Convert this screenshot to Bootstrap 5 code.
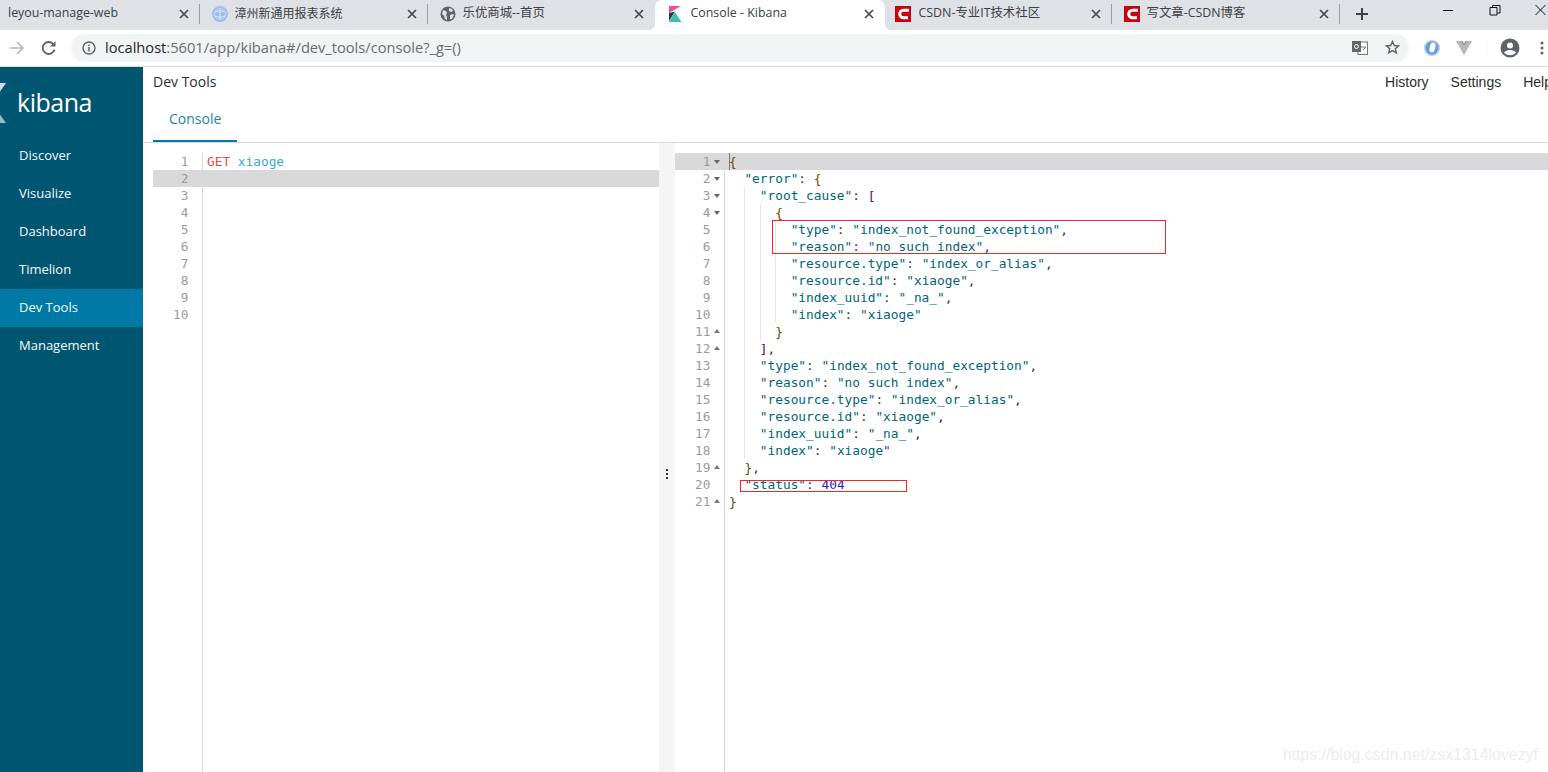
<!DOCTYPE html>
<html lang="en">
<head>
<meta charset="UTF-8">
<title>Console - Kibana</title>
<link href="https://cdn.jsdelivr.net/npm/bootstrap@5.3.0/dist/css/bootstrap.min.css" rel="stylesheet">
<style>
html, body { height: 100%; overflow: hidden; }
body { font-family: "Open Sans", sans-serif; color: #2d2d2d; background: #fff; }
.tab-strip { height: 30px; background: #dee1e6; }
.tab-item { width: 228px; height: 30px; padding: 0 10px 3px 12px; font-size: 12.4px; color: #3c4043; position: relative; flex: none; }
.tab-item .tab-label { flex: 1; white-space: nowrap; overflow: hidden; font-family: "Open Sans", "Noto Sans CJK SC", sans-serif; margin-left: 7px; }
.tab-first { width: 199.5px; padding-left: 8px; }
.tab-first .tab-label { margin-left: 0; }
.tab-item .tab-cjk { font-size: 12px; }
.tab-third { width: 227px; }
.tab-fifth { width: 227px; padding-left: 10px; }
.tab-fifth .tab-label { margin-left: 8px; }
.tab-sep::after { content: ""; position: absolute; right: 0; top: 4px; height: 20px; width: 1px; background: #9a9da1; }
.tab-on { background: #fff; width: 230px; border-radius: 7px 7px 0 0; padding-left: 14px; }
.tab-on .tab-label { margin-left: 9px; }
.tab-on::before, .tab-on::after { content: ""; position: absolute; bottom: 0; width: 7px; height: 7px; }
.tab-on::before { left: -7px; background: radial-gradient(circle at 0 0, #dee1e6 7px, #fff 7.5px); }
.tab-on::after { right: -7px; background: radial-gradient(circle at 100% 0, #dee1e6 7px, #fff 7.5px); }
.tab-close { width: 10px; height: 10px; margin-right: 1px; flex: none; }
.new-tab { margin-left: 16px; margin-bottom: 3px; }
.win-controls { gap: 28px; }
.tool-bar { height: 37px; border-bottom: 1px solid #dcdcdc; padding-bottom: 1px; }
.back-icon { margin-left: 8px; }
.reload-icon { margin-left: 15px; }
.addr-bar { width: 1338px; height: 28px; margin-left: 14px; background: #f1f3f4; border-radius: 14px; padding: 0 9px 0 11px; font-size: 14.65px; color: #6a6d70; }
.addr-text { margin-left: 9px; }
.addr-host { color: #24282b; }
.star-icon { margin-left: 17px; }
.ext-one { margin-left: 15px; }
.ext-two { margin-left: 16px; }
.tool-sep { width: 1px; height: 16px; margin-left: 14px; }
.avatar-icon { margin-left: 13px; }
.menu-icon { margin-left: 20px; }
.app-body { height: 705px; }
.side-nav { width: 143px; background: #005571; flex: none; overflow: hidden; }
.side-logo { height: 70px; color: #fff; font-size: 25px; font-weight: 500; letter-spacing: -.5px; padding: 2px 0 0 17px; position: relative; }
.side-logo svg { position: absolute; left: -30px; top: 16px; }
.side-link { height: 38px; padding-left: 19px; font-size: 13px; font-weight: 500; color: #f7fafb; text-decoration: none; }
.side-link.is-on { background: #0079a5; }
.main-area { min-width: 0; }
.head-bar { height: 30px; padding: 0 0 2px 10px; font-size: 14px; }
.head-links { gap: 22px; white-space: nowrap; margin: 2px -4px 0 0; font-family: "Liberation Sans", sans-serif; }
.tab-row { height: 46px; border-bottom: 1px solid #d9d9d9; padding-left: 10px; }
.tab-link { display: flex; align-items: center; height: 45px; padding: 0 16px; font-size: 14px; color: #1a83a8; border-bottom: 2px solid #0079a5; margin-bottom: -1px; text-decoration: none; width: 84px; }
.editor-row { padding-top: 10px; height: 629px; }
.pane { position: relative; overflow: hidden; }
.pane-left { width: 516px; padding-left: 10px; flex: none; }
.pane-right { flex: 1; min-width: 0; }
.divider { width: 16px; flex: none; background: #f5f5f5; position: relative; margin-top: -10px; }
.divider-dots { position: absolute; left: 7px; top: 325px; width: 2px; height: 12px; background: radial-gradient(circle, #333 1px, transparent 1.2px) 0 0 / 2px 4px; }
.gutter-line { position: absolute; top: -10px; bottom: 0; width: 1px; background: #d9d9d9; left: 49px; }
.pane-left .gutter-line { left: 59px; }
.code-line { display: flex; height: 17px; line-height: 17px; font-family: "DejaVu Sans Mono", monospace; font-size: 12.8px; white-space: pre; position: relative; }
.code-line.is-cur { background: #d9d9db; }
.line-no { width: 50px; flex: none; padding-right: 14.5px; text-align: right; color: #9a9a9a; position: relative; }
.line-code { padding-left: 4px; }
.caret-bar { position: absolute; left: 54px; top: 0; width: 1px; height: 17px; background: #777; }
.fold { position: absolute; left: 39px; top: 7px; width: 0; height: 0; border-left: 3px solid transparent; border-right: 3px solid transparent; }
.fold-open { border-top: 4px solid #666; }
.fold-end { border-bottom: 4px solid #777; top: 6px; }
.ind { display: inline-block; width: 2ch; height: 17px; vertical-align: top; }
.ind-guide { box-shadow: inset 1px 0 0 #e6e6e6; }
.c-key, .c-str { color: #00657a; }
.c-pun { color: #333; }
.c-brace { color: #5e4a00; }
.c-brack { color: #4a0a6e; }
.c-num { color: #2222cc; }
.c-verb { color: #d9534f; }
.c-url { color: #3aa8cf; }
.red-box { position: absolute; border: 1px solid #f22; pointer-events: none; }
.red-a { left: 97px; top: 67px; width: 394px; height: 34px; }
.red-b { left: 65px; top: 327px; width: 167px; height: 12px; }
.water-mark { position: absolute; right: 10px; bottom: 5px; font-family: "Liberation Sans", sans-serif; font-size: 15.9px; color: #ececec; }
</style>
</head>
<body>
<div class="tab-strip d-flex align-items-center">
    <div class="tab-item tab-first tab-sep d-flex align-items-center">
        <span class="tab-label">leyou-manage-web</span>
        <svg class="tab-close" viewBox="0 0 10 10"><path d="M1 1l8 8M9 1l-8 8" stroke="#45484b" stroke-width="1.7"/></svg>
    </div>
    <div class="tab-item tab-sep d-flex align-items-center">
        <svg width="16" height="16" viewBox="0 0 16 16"><circle cx="8" cy="8" r="8" fill="#9fbde6"/><circle cx="8" cy="8" r="5.500" fill="none" stroke="#c4d6ef"/><path d="M3 6q5-3 10 0M3 10q5 3 10 0M8 3v10" stroke="#dfe9f7" fill="none"/></svg>
        <span class="tab-label tab-cjk">漳州新通用报表系统</span>
        <svg class="tab-close" viewBox="0 0 10 10"><path d="M1 1l8 8M9 1l-8 8" stroke="#45484b" stroke-width="1.7"/></svg>
    </div>
    <div class="tab-item tab-third d-flex align-items-center">
        <svg width="16" height="16" viewBox="0 0 16 16"><circle cx="8" cy="8" r="7.500" fill="#5f6368"/><path d="M3 4l3 1 1 2-1 2 1 2 0 3-2-1-1-3-2-2zM9 2l3 1 1 2-2 1-2-1zM10 9l3-1 1 1-2 4-2 0z" fill="#dee1e6"/></svg>
        <span class="tab-label">乐优商城--首页</span>
        <svg class="tab-close" viewBox="0 0 10 10"><path d="M1 1l8 8M9 1l-8 8" stroke="#45484b" stroke-width="1.7"/></svg>
    </div>
    <div class="tab-item tab-on d-flex align-items-center">
        <svg width="13" height="16" viewBox="0 0 13 16"><path d="M0 0h12L0 7z" fill="#ee5097"/><path d="M0 7l6-1.500L0 15z" fill="#343741"/><path d="M6 6l6.500 10H0v-.5z" fill="#3ebeb0"/></svg>
        <span class="tab-label">Console - Kibana</span>
        <svg class="tab-close" viewBox="0 0 10 10"><path d="M1 1l8 8M9 1l-8 8" stroke="#45484b" stroke-width="1.7"/></svg>
    </div>
    <div class="tab-item tab-fifth tab-sep d-flex align-items-center">
        <svg width="16" height="16" viewBox="0 0 16 16"><rect width="16" height="16" fill="#c9000f"/><path d="M14 4.200H8.500a3.800 3.800 0 0 0 0 7.600H13" stroke="#fff" stroke-width="3" fill="none"/></svg>
        <span class="tab-label">CSDN-专业IT技术社区</span>
        <svg class="tab-close" viewBox="0 0 10 10"><path d="M1 1l8 8M9 1l-8 8" stroke="#45484b" stroke-width="1.7"/></svg>
    </div>
    <div class="tab-item tab-sep d-flex align-items-center">
        <svg width="16" height="16" viewBox="0 0 16 16"><rect width="16" height="16" fill="#c9000f"/><path d="M14 4.200H8.500a3.800 3.800 0 0 0 0 7.600H13" stroke="#fff" stroke-width="3" fill="none"/></svg>
        <span class="tab-label">写文章-CSDN博客</span>
        <svg class="tab-close" viewBox="0 0 10 10"><path d="M1 1l8 8M9 1l-8 8" stroke="#45484b" stroke-width="1.7"/></svg>
    </div>
    <svg class="new-tab" width="12" height="12" viewBox="0 0 12 12"><path d="M6 0v12M0 6h12" stroke="#3c4043" stroke-width="2"/></svg>
    <div class="win-controls d-flex align-items-start ms-auto align-self-start">
        <svg width="18" height="20" viewBox="0 0 18 20"><path d="M1 10.500h10" stroke="#111"/></svg>
        <svg width="18" height="20" viewBox="0 0 18 20"><path d="M2 7.500h7v7.500H2zM4.500 7V5.500H12V13H9.500" stroke="#111" fill="none"/></svg>
        <svg width="14" height="20" viewBox="0 0 14 20"><path d="M1.500 5l10 10M11.500 5l-10 10" stroke="#111"/></svg>
    </div>
</div>
<div class="tool-bar d-flex align-items-center">
    <svg class="back-icon" width="18" height="16" viewBox="0 0 18 16"><path d="M2 8h13M9 2l6 6-6 6" stroke="#b5b7b9" stroke-width="1.700" fill="none"/></svg>
    <svg class="reload-icon" width="16" height="16" viewBox="0 0 16 16"><path d="M13.500 9.500A6 6 0 1 1 12 3.800" stroke="#5f6368" stroke-width="1.800" fill="none"/><path d="M14.500 1v5.500H9z" fill="#5f6368"/></svg>
    <div class="addr-bar d-flex align-items-center">
        <svg width="14" height="14" viewBox="0 0 14 14"><circle cx="7" cy="7" r="6" stroke="#5f6368" stroke-width="1.400" fill="none"/><path d="M7 6v4.500M7 3.500v1.500" stroke="#5f6368" stroke-width="1.500"/></svg>
        <span class="addr-text"><span class="addr-host">localhost</span>:5601/app/kibana#/dev_tools/console?_g=()</span>
        <svg class="ms-auto" width="16" height="15" viewBox="0 0 16 15"><rect x="6" y="2" width="9.500" height="12.500" fill="#fff" stroke="#777"/><rect width="9" height="11" y="1" fill="#666"/><circle cx="4.500" cy="6.500" r="2" stroke="#fff" fill="none"/><path d="M9 7h5M11 10l3-3" stroke="#777"/></svg>
        <svg class="star-icon" width="15" height="15" viewBox="0 0 15 15"><path d="M7.500 1.500l1.800 4 4.200.4-3.200 2.800 1 4.200-3.800-2.300-3.800 2.300 1-4.200L1.500 5.900l4.200-.4z" stroke="#5f6368" stroke-width="1.400" fill="none"/></svg>
    </div>
    <svg class="ext-one" width="16" height="16" viewBox="0 0 16 16"><circle cx="8" cy="8" r="8" fill="#b4cce8"/><circle cx="8" cy="8" r="6.500" fill="#6a9cd0"/><ellipse cx="8.500" cy="7.500" rx="2.800" ry="5" transform="rotate(15 8.500 7.500)" fill="#fff"/></svg>
    <svg class="ext-two" width="16" height="14" viewBox="0 0 16 14"><path d="M0 0h5l3 5 3-5h5L8 14z" fill="#b7b7b7"/><path d="M5 0l3 5 3-5h-1.500L8 2.500 6.500 0z" fill="#8f8f8f"/></svg>
    <span class="tool-sep bg-secondary-subtle"></span>
    <svg class="avatar-icon" width="20" height="20" viewBox="0 0 20 20"><circle cx="10" cy="10" r="9.500" fill="#5f6368"/><circle cx="10" cy="7.500" r="3" fill="#fff"/><path d="M4 14.500c2-3.500 10-3.500 12 0-3 3.500-9 3.500-12 0z" fill="#fff"/></svg>
    <svg class="menu-icon" width="4" height="14" viewBox="0 0 4 14"><circle cx="2" cy="2" r="1.500" fill="#5f6368"/><circle cx="2" cy="7" r="1.500" fill="#5f6368"/><circle cx="2" cy="12" r="1.500" fill="#5f6368"/></svg>
</div>
<div class="app-body d-flex">
    <nav class="side-nav">
        <div class="side-logo d-flex align-items-center">
            <svg width="36" height="40" viewBox="0 0 36 40"><path d="M22 20L36 0h-6L18 14z" fill="#cfe0e5"/><path d="M22 20l14 20h-18z" fill="#9dbcc6"/></svg>
            <span>kibana</span>
        </div>
        <div class="d-flex flex-column" id="sideList"></div>
    </nav>
    <div class="main-area flex-grow-1 d-flex flex-column">
        <div class="head-bar d-flex align-items-center">
            <span>Dev Tools</span>
            <div class="head-links d-flex ms-auto"><span>History</span><span>Settings</span><span>Help</span></div>
        </div>
        <div class="tab-row d-flex">
            <a class="tab-link" href="#">Console</a>
        </div>
        <div class="editor-row d-flex">
            <div class="pane pane-left" id="leftPane"><div class="gutter-line"></div></div>
            <div class="divider"><div class="divider-dots"></div></div>
            <div class="pane pane-right" id="rightPane">
                <div class="gutter-line"></div>
                <div class="caret-bar"></div>
                <div class="red-box red-a"></div>
                <div class="red-box red-b"></div>
            </div>
        </div>
    </div>
</div>
<div class="water-mark">https://blog.csdn.net/zsx1314lovezyf</div>
<script>
const navItems = ["Discover", "Visualize", "Dashboard", "Timelion", "Dev Tools", "Management"];
document.getElementById("sideList").innerHTML = navItems.map(n =>
    `<a href="#" class="side-link d-flex align-items-center${n === "Dev Tools" ? " is-on" : ""}">${n}</a>`).join("");

// [level, guides, html, fold]
const k = s => `<span class="c-key">"${s}"</span>`;
const s = t => `<span class="c-str">"${t}"</span>`;
const p = t => `<span class="c-pun">${t}</span>`;
const b = t => `<span class="c-brace">${t}</span>`;
const q = t => `<span class="c-brack">${t}</span>`;
const pair = (a, c, end) => k(a) + p(": ") + s(c) + (end ? p(",") : "");
const rightLines = [
    [0, 0, b("{"), "open"],
    [1, 0, k("error") + p(": ") + b("{"), "open"],
    [2, 1, k("root_cause") + p(": ") + q("["), "open"],
    [3, 2, b("{"), "open"],
    [4, 3, pair("type", "index_not_found_exception", 1)],
    [4, 3, pair("reason", "no such index", 1)],
    [4, 3, pair("resource.type", "index_or_alias", 1)],
    [4, 3, pair("resource.id", "xiaoge", 1)],
    [4, 3, pair("index_uuid", "_na_", 1)],
    [4, 3, pair("index", "xiaoge", 0)],
    [3, 2, b("}"), "end"],
    [2, 1, q("]") + p(","), "end"],
    [2, 1, pair("type", "index_not_found_exception", 1)],
    [2, 1, pair("reason", "no such index", 1)],
    [2, 1, pair("resource.type", "index_or_alias", 1)],
    [2, 1, pair("resource.id", "xiaoge", 1)],
    [2, 1, pair("index_uuid", "_na_", 1)],
    [2, 1, pair("index", "xiaoge", 0)],
    [1, 0, b("}") + p(","), "end"],
    [1, 0, k("status") + p(": ") + `<span class="c-num">404</span>`],
    [0, 0, b("}"), "end"]
];
function lineHtml(no, level, guides, html, fold, cur) {
    let ind = "";
    for (let i = 0; i < level; i++) {
        ind += `<span class="ind${i > 0 && i <= guides ? " ind-guide" : ""}"></span>`;
    }
    let foldEl = fold ? `<span class="fold fold-${fold}"></span>` : "";
    return `<div class="code-line${cur ? " is-cur" : ""}"><div class="line-no">${no}${foldEl}</div><div class="line-code">${ind}${html}</div></div>`;
}
document.getElementById("rightPane").insertAdjacentHTML("afterbegin",
    rightLines.map((l, i) => lineHtml(i + 1, l[0], l[1], l[2], l[3], i === 0)).join(""));
let leftHtml = lineHtml(1, 0, 0, `<span class="c-verb">GET</span> <span class="c-url">xiaoge</span>`);
for (let i = 2; i <= 10; i++) leftHtml += lineHtml(i, 0, 0, "", null, i === 2);
document.getElementById("leftPane").insertAdjacentHTML("afterbegin", leftHtml);
</script>
<script src="https://cdn.jsdelivr.net/npm/bootstrap@5.3.0/dist/js/bootstrap.bundle.min.js"></script>
</body>
</html>
